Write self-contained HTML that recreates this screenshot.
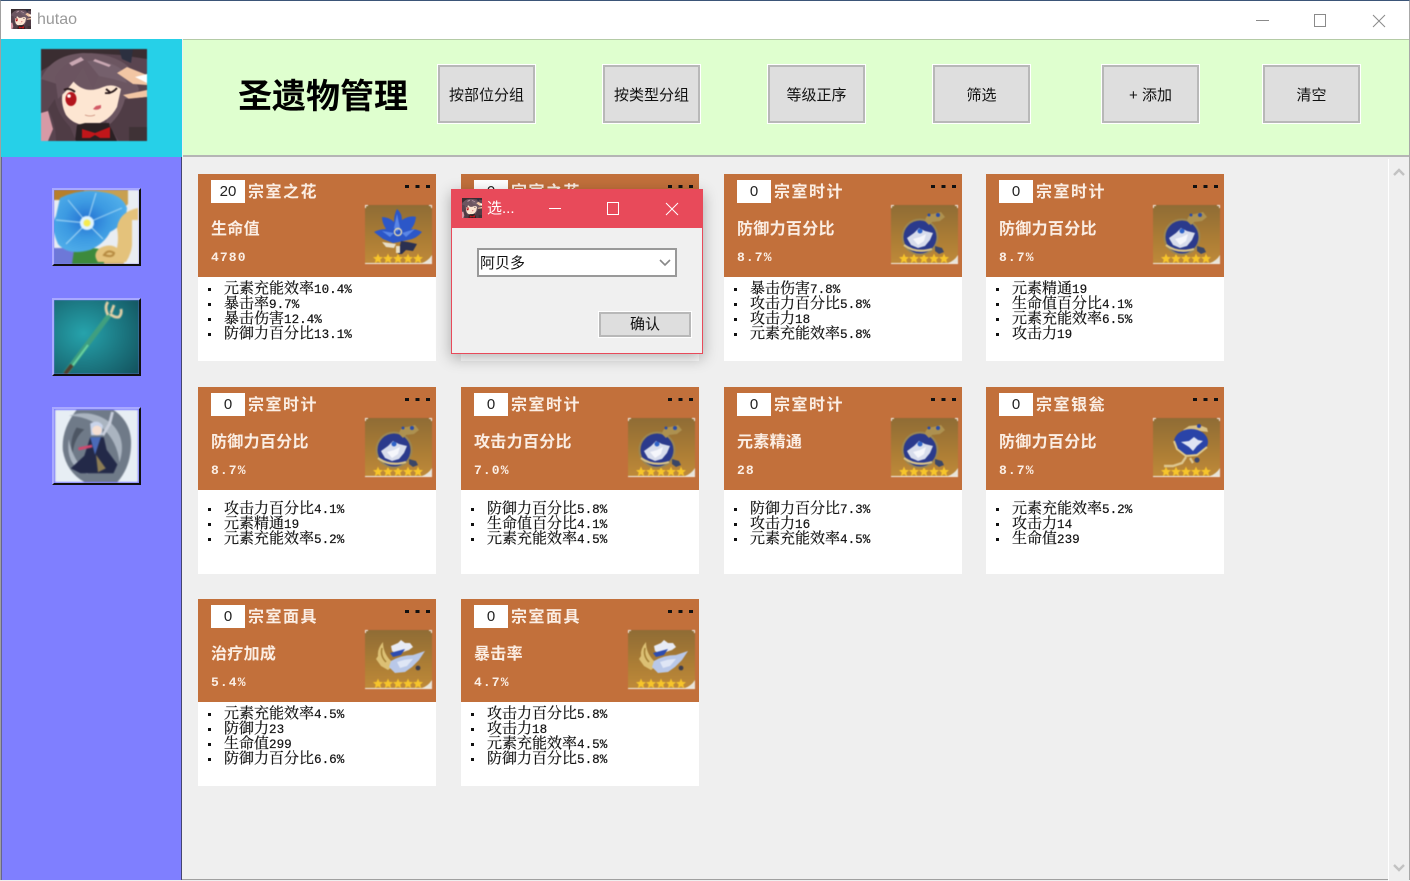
<!DOCTYPE html>
<html><head><meta charset="utf-8"><style>
*{margin:0;padding:0;box-sizing:border-box}
html,body{width:1410px;height:880px;overflow:hidden;background:#efefef;font-family:"Liberation Sans","Noto Sans CJK SC",sans-serif}
.abs,.btn,.side,.c{position:absolute}
#win{position:absolute;left:0;top:0;width:1410px;height:880px;border:1px solid #a0a0a0;border-top:1px solid #3b5578;border-right:1px solid #a8a8a8}
.btn{top:65px;width:97px;height:58px;background:#dedede;border:2px solid #b8b8b8;outline:1px solid #fff;font-size:15px;color:#111;text-align:center;line-height:57px}
.side{left:52px;width:89px;background:#7f7fff;border:2px solid;border-color:#a9a9ff #111 #111 #a9a9ff;overflow:hidden}
.side svg{display:block;width:85px;height:74px;filter:blur(.7px)}
.c{width:238px;height:187px;background:#fff}
.h{position:absolute;left:0;top:0;width:238px;height:103px;background:#c2703b}
.n{position:absolute;left:13px;top:6px;width:34px;height:23px;background:#fff;color:#222;font:400 15px/23px "Liberation Sans",sans-serif;text-align:center}
.t{position:absolute;left:50px;top:6px;color:#fbeee4;font:700 16px/21px "Noto Sans CJK SC",sans-serif;letter-spacing:1.5px;white-space:nowrap;filter:blur(.25px)}
.d{position:absolute;left:207px;top:11px;width:25px;height:3px;background:repeating-linear-gradient(90deg,#111 0 4px,transparent 4px 10.5px)}
.s{position:absolute;left:13px;top:42px;color:#fbeee4;font:700 16px/22px "Noto Sans CJK SC",sans-serif;letter-spacing:.3px;white-space:nowrap;filter:blur(.25px)}
.v{position:absolute;left:13px;top:76px;color:#fbeee4;font:700 13px/16px "Liberation Mono",monospace;white-space:nowrap;letter-spacing:1.1px;filter:blur(.2px)}
.a{position:absolute;left:167px;top:31px;width:67px;height:59px;filter:blur(.5px)}
ul{position:absolute;left:12px;list-style:none;color:#111;font:15px/15px "Liberation Mono","Noto Serif CJK SC",serif;white-space:nowrap;-webkit-text-stroke:.2px #111}
li{padding-left:14px;position:relative;height:15px}
li:before{content:"";position:absolute;left:-2px;top:6px;width:3px;height:3px;background:#111}
li span{font-size:12.6px;letter-spacing:0}
</style></head><body>
<svg width="0" height="0" style="position:absolute">
<defs>
<symbol id="st" viewBox="0 0 10 10"><polygon points="5,0 6.4,3.4 10,3.7 7.3,6 8.1,9.6 5,7.7 1.9,9.6 2.7,6 0,3.7 3.6,3.4" fill="#f7c52b"/></symbol>
<linearGradient id="bg" x1="0" y1="0" x2="0" y2="1"><stop offset="0" stop-color="#8f6c35"/><stop offset=".6" stop-color="#ad7e35"/><stop offset="1" stop-color="#bf8a3a"/></linearGradient>
<radialGradient id="pet" cx=".45" cy=".48" r=".6"><stop offset="0" stop-color="#2470d2"/><stop offset=".5" stop-color="#3c9ae2"/><stop offset="1" stop-color="#52b0ea"/></radialGradient>
<symbol id="base" viewBox="0 0 67 59"><rect width="67" height="59" fill="url(#bg)"/><path d="M0 0h3v1H1v2H0zM67 0h-3v1h2v2h1zM0 59v-1h67v1z" fill="#f4efe6"/><path d="M67 58H57q6-2 10-8z" fill="#e8e4da"/>
<use href="#st" x="8" y="48.500" width="10" height="10"/><use href="#st" x="18" y="48.500" width="10" height="10"/><use href="#st" x="28" y="48.500" width="10" height="10"/><use href="#st" x="38" y="48.500" width="10" height="10"/><use href="#st" x="48" y="48.500" width="10" height="10"/></symbol>
<symbol id="fl" viewBox="0 0 67 59"><use href="#base" width="67" height="59"/><path d="M32 4q5 4 5 11 8-5 14-3-1 8-5 12 6 0 11 3-6 7-14 8l-9 2-6 1-10-4-9-7q6-3 12-3-4-6-4-12 7 0 12 5 0-8 3-13z" fill="#2c57c8"/><path d="M32 9l3 14-3 4-3-4zM17 26l12 2-4 4zM50 24l-13 4 4 4z" fill="#5a86e6"/><circle cx="33" cy="27" r="3.500" fill="none" stroke="#e6d9b0" stroke-width="1.400"/><path d="M36 36l7 1 9 2-4 7-7-1-4 4h-4z" fill="#2a3050"/><path d="M17 37l14 2-2 4-8-1zM31 41h4v7h-4z" fill="#e9dfc6"/></symbol>
<symbol id="cl" viewBox="0 0 67 59"><use href="#base" width="67" height="59"/><circle cx="29" cy="32" r="18.500" fill="#9b8652"/><circle cx="29" cy="32" r="16.500" fill="#2b3a8c"/><path d="M16 33l7-5 5-5 6 3 8 2-3 7-5 6-7 2-7-3-3-5z" fill="#d8ddec"/><path d="M22 34l7-2 6-3-2 7-6 4z" fill="#f5f6fb"/><circle cx="29" cy="26" r="2.500" fill="#2e62c8"/><path d="M34 16q1-7 8-7l8-2 4 5-5 4-8 1-3 3z" fill="#ad9150"/><circle cx="47" cy="10" r="2" fill="#2b4da8"/><circle cx="38" cy="10" r="1.500" fill="#2b4da8"/><path d="M44 41l7 2 2 4-5 2-4-3z" fill="#3a4668"/><path d="M13 40q12 9 28 4" fill="none" stroke="#d8c38a" stroke-width="2.200"/></symbol>
<symbol id="gb" viewBox="0 0 67 59"><use href="#base" width="67" height="59"/><path d="M30 12l6-4 10-1 8 3 1 4-8-1-10 2z" fill="#d9c084"/><ellipse cx="38" cy="24" rx="17" ry="13" fill="#2a44a8"/><path d="M28 24l8-1 5-4 4 3 5 1-6 5-4 5-4-4z" fill="#dfe4f3"/><path d="M21 23l3 8 9 7 11-1 10-8" fill="none" stroke="#e0c98c" stroke-width="2"/><path d="M33 39l-4 6-9 3h-9M37 40l3 5" fill="none" stroke="#ddc690" stroke-width="2.400"/><circle cx="44" cy="42" r="2.600" fill="#39456e"/><circle cx="46" cy="8" r="2" fill="#2a44a8"/></symbol>
<symbol id="mk" viewBox="0 0 67 59"><use href="#base" width="67" height="59"/><path d="M18 12q-6 7-5 14l-2 3 5 7 7 4 4-3-1-6q-8-8-8-19z" fill="#dcc074"/><path d="M17 18q-2 8 4 14" fill="none" stroke="#a37f35" stroke-width="1.500"/><path d="M26 16l7-3 3-3 4 3 5 0 3 4-4 3-12 4-5-3z" fill="#e8ebf5"/><path d="M25 23l15-4-4 6-8 2z" fill="#2d4cb0"/><path d="M26 31q10-6 22-6l12-4-6 9-7 7-7 5-10 1-6-6z" fill="#b9c8e8"/><path d="M32 32q8-3 16-3l-6 7-7 2z" fill="#dfe6f5"/><circle cx="53" cy="38" r="2.400" fill="#3d3d4c"/></symbol>
<symbol id="hu" viewBox="0 0 106 92" preserveAspectRatio="none"><rect width="106" height="92" fill="#5a4550"/><path d="M0 0h106v10L80 6 50 4 20 10 0 22z" fill="#3a2d31"/><path d="M78 0h14l-2 14-9-4z" fill="#2c3040"/><path d="M0 30q10-24 42-26 30 0 46 14l10 22-12 40H66l-2-30z" fill="#6c5661"/><path d="M0 64l7-2 5 18-5 12H0z" fill="#d79aa6"/><path d="M22 42q5-4 10-10 12 14 30 6 10-4 18 2l-4 18q-8 15-24 18-18 2-27-10-6-12-3-24z" fill="#fde6d2"/><path d="M14 28Q28 6 46 12l12 14-6 14-10-22-9 14-8 10-8 8z" fill="#6b5460"/><path d="M46 12q20-2 34 8l6 14-14-4-14-3z" fill="#75606c"/><path d="M28 14l12-6 3 3-12 6zM54 10l16 6-2 2-16-6z" fill="#c9a7b2"/><ellipse cx="30" cy="50" rx="5.500" ry="7" fill="#b3141c"/><circle cx="28" cy="47" r="1.800" fill="#fff"/><path d="M23 41q5-3 11 2" fill="none" stroke="#2a1a1c" stroke-width="2"/><path d="M64 44q7 1 12-5M65 40l5 4" fill="none" stroke="#2a1a1c" stroke-width="1.800"/><path d="M76 24l10-6 20 8v10l-14-1zM82 46l24-5v7l-18 2z" fill="#f2c6a4"/><path d="M94 28l12-3v9z" fill="#fff"/><path d="M52 60q4 2 8-1l0-3-5 1z" fill="#d25a66"/><path d="M44 66q5 2 10 0" fill="none" stroke="#c98a78" stroke-width=".8"/><path d="M34 92l2-16 8-2h24l8 18z" fill="#2a2023"/><path d="M41 80l13 4 15-6 0 11-10 0-5-3-5 3h-8z" fill="#c0161a"/><path d="M7 60q8 14 8 32h20l-6-14Q16 64 14 50zM84 50l22-2v44H78l-10-16q12-10 16-26z" fill="#4f3c45"/><path d="M88 78h18v14H88z" fill="#3f3236"/></symbol>
</defs></svg>
<div id="win" style="background:linear-gradient(#fff 0 38px,transparent 38px)">
<svg class="abs" style="left:10px;top:8px;width:20px;height:20px;filter:blur(.3px)"><use href="#hu" width="20" height="20"/></svg>
<div class="abs" style="left:36px;top:9px;font-size:16px;line-height:20px;color:#999">hutao</div>
<svg class="abs" style="left:1250px;top:8px;width:150px;height:24px" fill="none" stroke="#8a8a8a" stroke-width="1"><path d="M5 11.500h13M63.500 5.500h11v12h-11zM122 6l12 12M134 6l-12 12"/></svg>
<div class="abs" style="left:0;top:38px;width:181px;height:118px;background:#26d0e8"></div>
<div class="abs" style="left:182px;top:38px;width:1226px;height:118px;background:#dfffcf;border-top:1px solid #b4cba6;border-bottom:2px solid #b5b5b5"></div>
<svg class="abs" style="left:40px;top:48px;width:106px;height:92px;filter:blur(.5px)"><use href="#hu" width="106" height="92"/></svg>
<div class="abs" style="left:0;top:156px;width:181px;height:723px;background:#7f7fff;border-left:1px solid #66668c;border-right:1px solid #454570"></div>
<div class="abs" style="left:1387px;top:158px;width:21px;height:722px;border-left:1px solid #fff;background:#efefef"></div>
<svg class="abs" style="left:1390px;top:160px;width:16px;height:718px" fill="none" stroke="#c2c2c2" stroke-width="2.400"><path d="M3 14l5-5 5 5M3 704l5 5 5-5"/></svg>
</div>
<div class="abs" style="left:238px;top:69px;width:180px;font:700 34px/50px 'Noto Sans CJK SC',sans-serif;color:#000;white-space:nowrap">圣遗物管理</div>
<div class="btn" style="left:438px">按部位分组</div>
<div class="btn" style="left:603px">按类型分组</div>
<div class="btn" style="left:768px">等级正序</div>
<div class="btn" style="left:933px">筛选</div>
<div class="btn" style="left:1102px">+ 添加</div>
<div class="btn" style="left:1263px">清空</div>
<div class="side" style="top:188px;height:78px"><svg viewBox="0 0 85 74"><rect width="85" height="74" fill="#e9edf2"/><path d="M0 0h30v10H0z" fill="#b77f2a"/><path d="M0 58h24v16H0z" fill="#6d78d8"/><path d="M20 60q16-4 30 0l4 14H18z" fill="#3d8a3c"/><path d="M50 60l20 0 0 14H50zM70 0h4v10h-4z" fill="#d8b872"/><path d="M30 0h44v14l-30 30H30z" fill="#c8a050"/><path d="M6 8Q26-2 48 2q20 2 25 16-1 16-17 24-6 12-20 18Q14 66 4 54-4 36 2 26z" fill="url(#pet)"/><path d="M33 33L14 10M33 33L42 3M33 33L68 18M33 33L2 30M33 33L12 54M33 33l16 16" stroke="#b5e0f7" stroke-width=".9"/><circle cx="33" cy="33" r="7" fill="#dff2ff"/><circle cx="33" cy="33" r="3.500" fill="#f5ea50"/><path d="M44 72q-6-8 2-14 10-5 17 0 2-10 0-20 2-16 21-20v22q-6 3-6 9 1 12-6 23z" fill="#e4c27b"/><path d="M50 65q4-6 10-2-1 5-10 2z" fill="none" stroke="#b58940" stroke-width="2"/><path d="M78 30h7v34h-7z" fill="#e9edf2"/></svg></div>
<div class="side" style="top:298px;height:78px"><svg viewBox="0 0 85 74"><defs><radialGradient id="tl" cx=".35" cy=".45" r=".8"><stop offset="0" stop-color="#26a3ac"/><stop offset="1" stop-color="#135560"/></radialGradient></defs><rect width="85" height="74" fill="url(#tl)"/><path d="M11 74L56 14" stroke="#3f9f80" stroke-width="5"/><path d="M14 72L34 45" stroke="#6ad4a0" stroke-width="2"/><path d="M11 74l7-9" stroke="#4f3f30" stroke-width="4"/><path d="M54 15q-4-8 0-13M56 14q5 4 9 3 3-3 2-8M57 13l3-8" fill="none" stroke="#e2cfa6" stroke-width="2.800"/></svg></div>
<div class="side" style="top:407px;height:78px"><svg viewBox="0 0 85 74" style="margin-top:1px;height:72px"><rect width="85" height="74" fill="#6f7a88"/><path d="M0 0h22Q6 20 8 42q4 22 22 32H0zM85 0H60q18 12 18 34 0 24-14 40h21z" fill="#e7eef4"/><path d="M14 6q24-8 44 8 16 16 8 40-2-22-18-36Q32 6 14 6zM14 30q4 22 20 36-24-8-20-36z" fill="#aab4c0"/><path d="M22 18q-8 14-4 26 2-16 12-24z" fill="#4d5663"/><path d="M36 14q8-5 13 2l-1 10h-11z" fill="#c9d4ea"/><circle cx="43" cy="21" r="5" fill="#f6dfd2"/><path d="M36 28h14l3 13 11 15-4 9H26l-10-5 14-13z" fill="#232948"/><path d="M36 28l5 18 6-18z" fill="#4a6ab8"/><path d="M49 26l7-12 3-12" fill="none" stroke="#c9cfdc" stroke-width="3"/><path d="M24 40l14-3" stroke="#d0486e" stroke-width="3"/><path d="M42 46l10 14-8 4z" fill="#8d7d55"/></svg></div>

<div class="c" style="left:198px;top:174px"><div class="h"></div><div class="n">20</div><div class="t">宗室之花</div><i class="d"></i><div class="s">生命值</div><div class="v">4780</div><svg class="a"><use href="#fl" width="67" height="59"/></svg><ul style="top:108px"><li>元素充能效率<span>10.4%</span></li><li>暴击率<span>9.7%</span></li><li>暴击伤害<span>12.4%</span></li><li>防御力百分比<span>13.1%</span></li></ul></div>
<div class="c" style="left:461px;top:174px"><div class="h"></div><div class="n">0</div><div class="t">宗室之花</div><i class="d"></i></div>
<div class="c" style="left:724px;top:174px"><div class="h"></div><div class="n">0</div><div class="t">宗室时计</div><i class="d"></i><div class="s">防御力百分比</div><div class="v">8.7%</div><svg class="a"><use href="#cl" width="67" height="59"/></svg><ul style="top:108px"><li>暴击伤害<span>7.8%</span></li><li>攻击力百分比<span>5.8%</span></li><li>攻击力<span>18</span></li><li>元素充能效率<span>5.8%</span></li></ul></div>
<div class="c" style="left:986px;top:174px"><div class="h"></div><div class="n">0</div><div class="t">宗室时计</div><i class="d"></i><div class="s">防御力百分比</div><div class="v">8.7%</div><svg class="a"><use href="#cl" width="67" height="59"/></svg><ul style="top:108px"><li>元素精通<span>19</span></li><li>生命值百分比<span>4.1%</span></li><li>元素充能效率<span>6.5%</span></li><li>攻击力<span>19</span></li></ul></div>

<div class="c" style="left:198px;top:387px"><div class="h"></div><div class="n">0</div><div class="t">宗室时计</div><i class="d"></i><div class="s">防御力百分比</div><div class="v">8.7%</div><svg class="a"><use href="#cl" width="67" height="59"/></svg><ul style="top:115px"><li>攻击力百分比<span>4.1%</span></li><li>元素精通<span>19</span></li><li>元素充能效率<span>5.2%</span></li></ul></div>
<div class="c" style="left:461px;top:387px"><div class="h"></div><div class="n">0</div><div class="t">宗室时计</div><i class="d"></i><div class="s">攻击力百分比</div><div class="v">7.0%</div><svg class="a"><use href="#cl" width="67" height="59"/></svg><ul style="top:115px"><li>防御力百分比<span>5.8%</span></li><li>生命值百分比<span>4.1%</span></li><li>元素充能效率<span>4.5%</span></li></ul></div>
<div class="c" style="left:724px;top:387px"><div class="h"></div><div class="n">0</div><div class="t">宗室时计</div><i class="d"></i><div class="s">元素精通</div><div class="v">28</div><svg class="a"><use href="#cl" width="67" height="59"/></svg><ul style="top:115px"><li>防御力百分比<span>7.3%</span></li><li>攻击力<span>16</span></li><li>元素充能效率<span>4.5%</span></li></ul></div>
<div class="c" style="left:986px;top:387px"><div class="h"></div><div class="n">0</div><div class="t">宗室银瓮</div><i class="d"></i><div class="s">防御力百分比</div><div class="v">8.7%</div><svg class="a"><use href="#gb" width="67" height="59"/></svg><ul style="top:115px"><li>元素充能效率<span>5.2%</span></li><li>攻击力<span>14</span></li><li>生命值<span>239</span></li></ul></div>

<div class="c" style="left:198px;top:599px"><div class="h"></div><div class="n">0</div><div class="t">宗室面具</div><i class="d"></i><div class="s">治疗加成</div><div class="v">5.4%</div><svg class="a"><use href="#mk" width="67" height="59"/></svg><ul style="top:108px"><li>元素充能效率<span>4.5%</span></li><li>防御力<span>23</span></li><li>生命值<span>299</span></li><li>防御力百分比<span>6.6%</span></li></ul></div>
<div class="c" style="left:461px;top:599px"><div class="h"></div><div class="n">0</div><div class="t">宗室面具</div><i class="d"></i><div class="s">暴击率</div><div class="v">4.7%</div><svg class="a"><use href="#mk" width="67" height="59"/></svg><ul style="top:108px"><li>攻击力百分比<span>5.8%</span></li><li>攻击力<span>18</span></li><li>元素充能效率<span>4.5%</span></li><li>防御力百分比<span>5.8%</span></li></ul></div>

<div class="abs" style="left:451px;top:189px;width:252px;height:165px;background:#f0f0f0;border:1px solid #e84a5a;box-shadow:0 4px 14px rgba(0,0,0,.3)">
<div class="abs" style="left:-1px;top:-1px;width:252px;height:39px;background:#e84a5a"></div>
<svg class="abs" style="left:10px;top:8px;width:20px;height:20px;filter:blur(.3px)"><use href="#hu" width="20" height="20"/></svg>
<div class="abs" style="left:35px;top:9px;color:#fff;font-size:15px;line-height:20px">选...</div>
<svg class="abs" style="left:90px;top:6px;width:150px;height:24px" fill="none" stroke="#fff" stroke-width="1"><path d="M7 12.500h12M65.500 6.500h11v12h-11zM124 7l12 12M136 7l-12 12"/></svg>
<div class="abs" style="left:25px;top:58px;width:200px;height:29px;background:#fff;border:2px solid #999;font-size:15px;line-height:27px;padding-left:1px;color:#111">阿贝多<svg class="abs" style="left:179px;top:8px;width:14px;height:10px" fill="none" stroke="#888" stroke-width="1.600"><path d="M2 2l5 5 5-5"/></svg></div>
<div class="abs" style="left:147px;top:122px;width:92px;height:25px;background:#dedede;border:2px solid #b8b8b8;outline:1px solid #fff;text-align:center;font-size:15px;line-height:22px;color:#111">确认</div>
</div>
</body></html>
